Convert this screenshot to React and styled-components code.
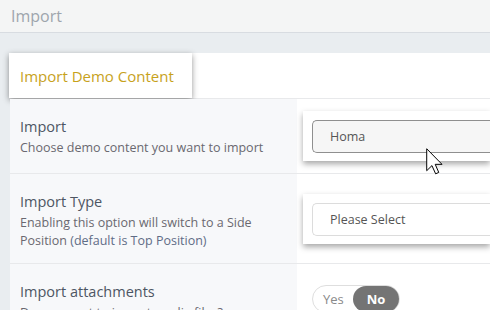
import React from "react";
import styled, { createGlobalStyle } from "styled-components";

const Global = createGlobalStyle`
  html, body {
    margin: 0;
    padding: 0;
    background: #e9edf0;
    font-family: "Open Sans", "Liberation Sans", sans-serif;
    overflow: hidden;
  }
  #root {
    width: 490px;
    height: 310px;
    position: relative;
    overflow: hidden;
  }
`;

const TopBar = styled.div`
  height: 32px;
  line-height: 32px;
  background: #f4f5f5;
  border-bottom: 1px solid #d8dce1;
  padding-left: 11px;
  font-size: 16px;
  color: #9ea5ad;
`;

const Wrap = styled.div`
  padding: 20px 0 0 10px;
`;

const Panel = styled.div`
  background: #fff;
`;

const HeadArea = styled.div`
  height: 45px;
  border-bottom: 1px solid #e8e9eb;
`;

const HeadBox = styled.div`
  width: 183px;
  height: 45px;
  margin-left: -1px;
  box-sizing: border-box;
  padding-left: 11px;
  background: #fff;
  box-shadow: 0 2px 6px rgba(0, 0, 0, 0.42);
  display: flex;
  align-items: center;
  font-size: 15px;
  color: #c7a21c;
`;

const Row = styled.div`
  display: grid;
  grid-template-columns: 287px 1fr;
  border-bottom: 1px solid #e8e9eb;
  min-height: ${(p) => p.h}px;
`;

const Info = styled.div`
  background: #f7f8fa;
  padding: 18px 10px 0 10px;
`;

const Title = styled.div`
  font-size: 14.5px;
  line-height: 20px;
  color: #4d5663;
`;

const Desc = styled.div`
  font-size: 12.5px;
  line-height: 18px;
  color: #6a6870;
  margin-top: 2px;
  span {
    color: #5f6c86;
  }
`;

const Field = styled.div`
  display: flex;
  align-items: ${(p) => (p.top ? "flex-start" : "center")};
  padding-left: ${(p) => (p.top ? "15px" : "6px")};
  padding-top: ${(p) => (p.top ? "21px" : "0")};
`;

const Card = styled.div`
  flex: 1;
  background: #fff;
  padding: 9px 0 8px 9px;
  box-shadow: 0 3px 6px rgba(0, 0, 0, 0.35);
`;

const Select = styled.div`
  height: 33px;
  box-sizing: border-box;
  border: 1px solid ${(p) => (p.active ? "#8f8f8f" : "#dcdcdc")};
  border-right: none;
  border-radius: 5px 0 0 5px;
  background: ${(p) => (p.active ? "#f6f6f6" : "#fff")};
  display: flex;
  align-items: center;
  padding-left: 17px;
  font-size: 12.5px;
  color: #555;
`;

const Toggle = styled.div`
  display: inline-flex;
  align-items: center;
  height: 28px;
  box-sizing: border-box;
  border: 1px solid #dedede;
  border-radius: 14px;
  background: #fff;
  font-size: 13px;
`;

const Opt = styled.div`
  height: 26px;
  line-height: 26px;
  border-radius: 13px;
  background: ${(p) => (p.on ? "#747474" : "transparent")};
  color: ${(p) => (p.on ? "#fff" : "#8a8a8a")};
  font-weight: ${(p) => (p.on ? 700 : 400)};
  padding: ${(p) => (p.on ? "0 14px" : "0 9px 0 10px")};
`;

const Cursor = styled.svg`
  position: absolute;
  left: 426px;
  top: 148px;
`;

export default function App() {
  return (
    <>
      <Global />
      <TopBar>Import</TopBar>
      <Wrap>
        <Panel>
          <HeadArea>
            <HeadBox>Import Demo Content</HeadBox>
          </HeadArea>
          <Row h={74}>
            <Info>
              <Title>Import</Title>
              <Desc>Choose demo content you want to import</Desc>
            </Info>
            <Field>
              <Card>
                <Select active>Homa</Select>
              </Card>
            </Field>
          </Row>
          <Row h={89}>
            <Info>
              <Title>Import Type</Title>
              <Desc>
                Enabling this option will switch to a Side Position{" "}
                <span>(default is Top Position)</span>
              </Desc>
            </Info>
            <Field>
              <Card>
                <Select>Please Select</Select>
              </Card>
            </Field>
          </Row>
          <Row h={80}>
            <Info>
              <Title>Import attachments</Title>
              <Desc>Do you want to import media files?</Desc>
            </Info>
            <Field top>
              <Toggle>
                <Opt>Yes</Opt>
                <Opt on>No</Opt>
              </Toggle>
            </Field>
          </Row>
        </Panel>
      </Wrap>
      <Cursor width="17" height="27" viewBox="0 0 12 19">
        <path
          d="M0.5 0.5 L0.5 16 L4.2 12.4 L6.8 18.2 L9 17.2 L6.5 11.5 L11.3 11.5 Z"
          fill="#fff"
          stroke="#000"
          strokeWidth="0.7"
          strokeLinejoin="miter"
        />
      </Cursor>
    </>
  );
}
